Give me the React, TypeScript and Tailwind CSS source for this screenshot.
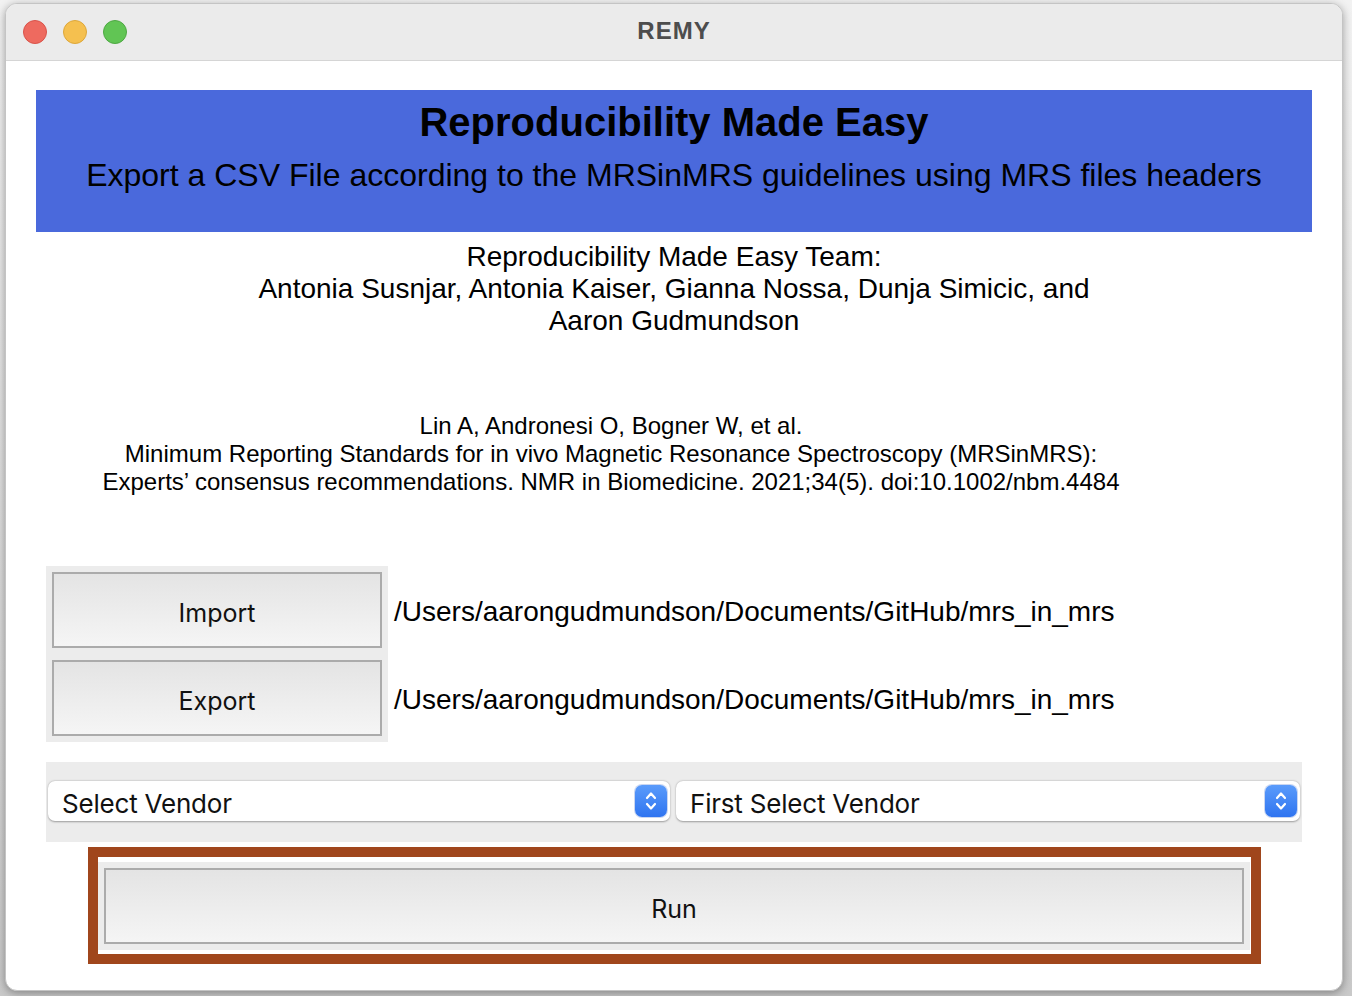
import React from "react";

const helv = { fontFamily: '"Liberation Sans", Arial, sans-serif' };
const sf = { fontFamily: 'Inter, "Noto Sans", sans-serif' };

function MacButton({ label, className }: { label: string; className: string }) {
  return (
    <div
      className={`flex items-center justify-center border-2 border-[#ababab] bg-gradient-to-b from-[#e4e4e4] to-[#f5f5f5] pt-[7px] text-[25px] text-[#111] ${className}`}
      style={sf}
    >
      {label}
    </div>
  );
}

function Stepper() {
  return (
    <div className="flex h-[32px] w-[32px] items-center justify-center rounded-[7px] bg-gradient-to-b from-[#5a9bfb] to-[#2f74f0] shadow-[0_0_0_1px_rgba(40,90,200,0.25)]">
      <svg width="14" height="24" viewBox="0 0 14 24" fill="none" stroke="white" strokeWidth="2.2" strokeLinecap="round" strokeLinejoin="round">
        <path d="M3 9 L7 4.5 L11 9" />
        <path d="M3 15 L7 19.5 L11 15" />
      </svg>
    </div>
  );
}

function Select({ label, className }: { label: string; className: string }) {
  return (
    <div
      className={`flex h-[40px] items-center justify-between rounded-[7px] bg-white pl-[14px] pr-[3px] shadow-[0_0.5px_2px_rgba(0,0,0,0.35)] ${className}`}
    >
      <span className="pt-[4px] text-[26px] tracking-[-0.2px] text-[#111]" style={sf}>
        {label}
      </span>
      <Stepper />
    </div>
  );
}

export default function App() {
  return (
    <div className="h-[996px] w-[1352px] bg-gradient-to-b from-[#f2f2f2] to-[#c9c9c9] pl-[5px] pt-[3px]">
      <div className="flex h-[988px] w-[1338px] flex-col overflow-hidden rounded-[12px] border border-[#c4c4c4] bg-white shadow-[0_2px_8px_rgba(0,0,0,0.35)]">
        {/* Title bar */}
        <div className="relative flex h-[57px] shrink-0 items-center justify-center border-b border-[#d5d5d5] bg-[#ebebeb]">
          <div className="absolute left-[17px] top-[16px] flex gap-[16px]">
            <div className="h-[24px] w-[24px] rounded-full border border-[#d9534a] bg-[#ee6a5f]" />
            <div className="h-[24px] w-[24px] rounded-full border border-[#dda73a] bg-[#f5c04f]" />
            <div className="h-[24px] w-[24px] rounded-full border border-[#4ea843] bg-[#61c554]" />
          </div>
          <span className="pb-[2px] text-[24px] font-bold tracking-[1px] text-[#4d4d4d]" style={helv}>
            REMY
          </span>
        </div>

        {/* Content */}
        <div className="flex flex-col px-[30px] pt-[29px]" style={helv}>
          <div className="flex h-[142px] flex-col items-center bg-[#4a69dc] pt-[8px] text-black">
            <div className="text-[40px] font-bold leading-[48px]">Reproducibility Made Easy</div>
            <div className="mt-[11px] text-[32px] leading-[36px]">
              Export a CSV File according to the MRSinMRS guidelines using MRS files headers
            </div>
          </div>

          <div className="mt-[9px] text-center text-[28px] leading-[32px] text-black">
            Reproducibility Made Easy Team:
            <br />
            Antonia Susnjar, Antonia Kaiser, Gianna Nossa, Dunja Simicic, and
            <br />
            Aaron Gudmundson
          </div>

          <div className="mt-[75px] w-[1150px] text-center text-[24px] leading-[28px] text-black">
            Lin A, Andronesi O, Bogner W, et al.
            <br />
            Minimum Reporting Standards for in vivo Magnetic Resonance Spectroscopy (MRSinMRS):
            <br />
            Experts’ consensus recommendations. NMR in Biomedicine. 2021;34(5). doi:10.1002/nbm.4484
          </div>

          <div className="ml-[10px] mt-[70px] flex items-stretch">
            <div className="flex w-[342px] flex-col gap-[12px] bg-[#ececec] p-[6px]">
              <MacButton label="Import" className="h-[76px]" />
              <MacButton label="Export" className="h-[76px]" />
            </div>
            <div className="flex flex-col justify-between pl-[6px] pt-[6px] pb-[6px] text-[28px] text-black">
              <div className="flex h-[76px] items-center pt-[4px]">/Users/aarongudmundson/Documents/GitHub/mrs_in_mrs</div>
              <div className="flex h-[76px] items-center pt-[4px]">/Users/aarongudmundson/Documents/GitHub/mrs_in_mrs</div>
            </div>
          </div>

          <div className="ml-[10px] mt-[20px] flex h-[80px] w-[1256px] items-center gap-[6px] bg-[#ececec] px-[2px] pb-[2px]">
            <Select label="Select Vendor" className="w-[622px]" />
            <Select label="First Select Vendor" className="w-[624px]" />
          </div>

          <div className="ml-[52px] mt-[5px] h-[117px] w-[1173px] border-[10px] border-[#a0461c] bg-white pb-[4px] pr-[1px] pt-[5px]">
            <div className="h-full bg-[#ececec] p-[6px]">
              <MacButton label="Run" className="h-[76px]" />
            </div>
          </div>
        </div>
      </div>
    </div>
  );
}
